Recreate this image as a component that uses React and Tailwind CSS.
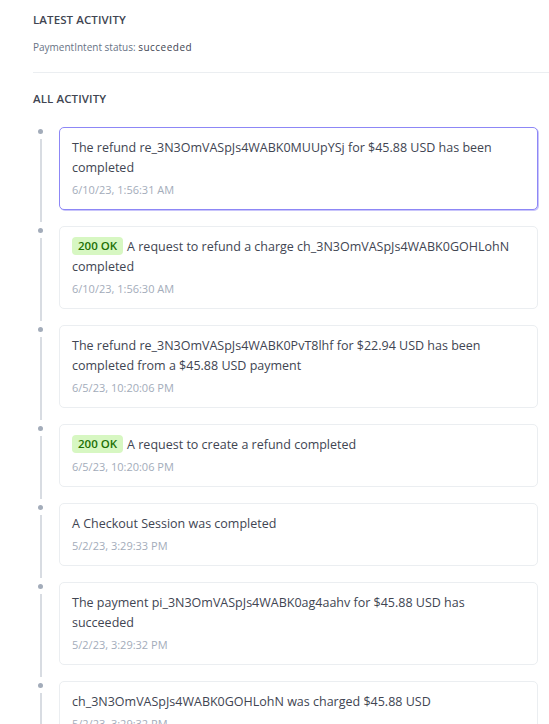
import React from "react";

const items = [
  { text: "The refund re_3N3OmVASpJs4WABK0MUUpYSj for $45.88 USD has been completed", time: "6/10/23, 1:56:31 AM", active: true },
  { badge: true, text: "A request to refund a charge ch_3N3OmVASpJs4WABK0GOHLohN completed", time: "6/10/23, 1:56:30 AM" },
  { text: "The refund re_3N3OmVASpJs4WABK0PvT8lhf for $22.94 USD has been completed from a $45.88 USD payment", time: "6/5/23, 10:20:06 PM" },
  { badge: true, text: "A request to create a refund completed", time: "6/5/23, 10:20:06 PM" },
  { text: "A Checkout Session was completed", time: "5/2/23, 3:29:33 PM" },
  { text: "The payment pi_3N3OmVASpJs4WABK0ag4aahv for $45.88 USD has succeeded", time: "5/2/23, 3:29:32 PM" },
  { text: "ch_3N3OmVASpJs4WABK0GOHLohN was charged $45.88 USD", time: "5/2/23, 3:29:32 PM" },
];

export default function App() {
  return (
    <div
      className="bg-white text-[#414552] min-h-screen"
      style={{ fontFamily: '"Open Sans", "Noto Sans", sans-serif' }}
    >
      <div className="pl-[33px]">
        <div className="pt-[13px] text-[11.5px] leading-[14px] font-semibold tracking-[0.1px]">LATEST ACTIVITY</div>
        <div className="mt-[13px] text-[10px] leading-[14px]">
          <span className="text-[#687385]">PaymentIntent status: </span>
          <span className="text-[#414552] tracking-[0.5px]">succeeded</span>
        </div>
        <div className="mt-[18px] h-px bg-[#ebeef1]" />
        <div className="mt-[19px] text-[11.5px] leading-[14px] font-semibold tracking-[0.1px]">ALL ACTIVITY</div>
        <div className="mt-[21px] pr-[11px]">
          {items.map((it, i) => (
            <div key={i} className="flex pb-[16px]">
              <div className="w-[15px] flex flex-col items-center shrink-0">
                <div className="mt-[2px] w-[5px] h-[5px] rounded-full bg-[#a3acba]" />
                <div className="mt-[5px] mb-[-12px] w-[2px] flex-1 bg-[#d8dce2]" />
              </div>
              <div
                className={
                  "ml-[11px] flex-1 rounded-[5px] border bg-white pl-[12px] pr-[16px] pt-[10px] pb-[11px] " +
                  (it.active ? "border-[#8d87f6] shadow-[1px_1px_0_#c9c5fb]" : "border-[#ebeef1]")
                }
              >
                <div className="text-[12.5px] leading-[20px]">
                  {it.badge && (
                    <span className="inline-block mr-[4px] rounded-[4px] bg-[#d7f7c2] px-[6px] text-[11.5px] leading-[18px] font-semibold text-[#217005] align-[1px]">
                      200 OK
                    </span>
                  )}
                  {it.text}
                </div>
                <div className="mt-[4px] text-[11px] leading-[16px] text-[#a3acba]">{it.time}</div>
              </div>
            </div>
          ))}
        </div>
      </div>
    </div>
  );
}
